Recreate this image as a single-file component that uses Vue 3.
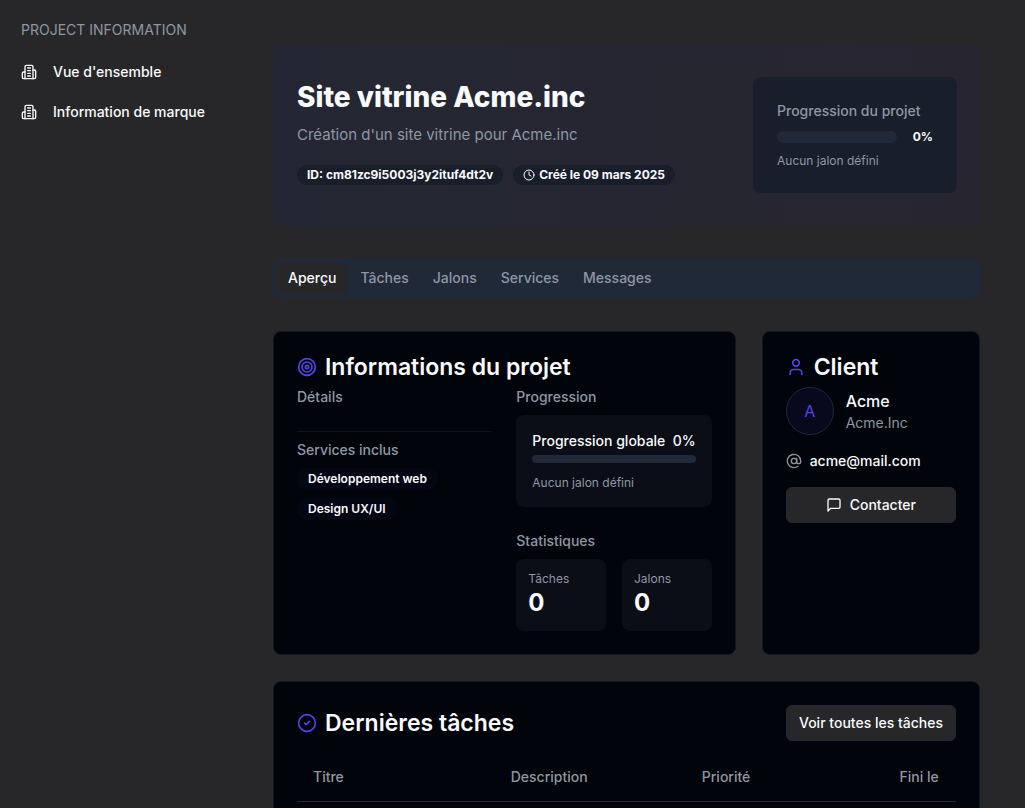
<script setup>
const navItems = ["Vue d'ensemble", 'Information de marque']
const tabs = ['Aperçu', 'Tâches', 'Jalons', 'Services', 'Messages']
const services = ['Développement web', 'Design UX/UI']
const stats = [
  { label: 'Tâches', value: 0 },
  { label: 'Jalons', value: 0 },
]
const columns = ['Titre', 'Description', 'Priorité', 'Fini le']
const progress = 0
</script>

<template>
  <div class="page">
    <aside class="sidebar">
      <h2 class="nav-title">PROJECT INFORMATION</h2>
      <nav class="nav">
        <a v-for="item in navItems" :key="item" href="#" class="nav-link">
          <svg class="icon16" viewBox="0 0 24 24">
            <path d="M6 22V4a2 2 0 0 1 2-2h8a2 2 0 0 1 2 2v18Z" />
            <path d="M6 12H4a2 2 0 0 0-2 2v6a2 2 0 0 0 2 2h2" />
            <path d="M18 9h2a2 2 0 0 1 2 2v9a2 2 0 0 1-2 2h-2" />
            <path d="M10 6h4M10 10h4M10 14h4M10 18h4" />
          </svg>
          <span>{{ item }}</span>
        </a>
      </nav>
    </aside>

    <main class="main">
      <header class="hero">
        <div class="hero-text">
          <h1>Site vitrine Acme.inc</h1>
          <p class="lead">Création d'un site vitrine pour Acme.inc</p>
          <div class="hero-badges">
            <span class="hero-badge">ID: cm81zc9i5003j3y2ituf4dt2v</span>
            <span class="hero-badge">
              <svg class="icon12" viewBox="0 0 24 24">
                <circle cx="12" cy="12" r="10" />
                <path d="M12 6v6l4 2" />
              </svg>
              Créé le 09 mars 2025
            </span>
          </div>
        </div>
        <section class="hero-progress">
          <h2 class="label">Progression du projet</h2>
          <div class="hero-bar-row">
            <div class="bar hero-bar"><div class="bar-fill" :style="{ width: progress + '%' }"></div></div>
            <span class="percent">{{ progress }}%</span>
          </div>
          <p class="note">Aucun jalon défini</p>
        </section>
      </header>

      <div class="tabs" role="tablist">
        <button v-for="(tab, i) in tabs" :key="tab" type="button" role="tab" :aria-selected="i === 0"
          class="tab" :class="{ active: i === 0 }">{{ tab }}</button>
      </div>

      <div class="grid">
        <section class="card wide">
          <h2 class="card-title">
            <svg class="icon20" viewBox="0 0 24 24">
              <circle cx="12" cy="12" r="10" />
              <circle cx="12" cy="12" r="6" />
              <circle cx="12" cy="12" r="2" />
            </svg>
            Informations du projet
          </h2>
          <div class="info-cols">
            <div>
              <h3 class="label">Détails</h3>
              <hr class="separator" />
              <h3 class="label">Services inclus</h3>
              <div class="services">
                <span v-for="s in services" :key="s" class="service">{{ s }}</span>
              </div>
            </div>
            <div>
              <h3 class="label">Progression</h3>
              <div class="panel">
                <div class="panel-row">
                  <span>Progression globale</span>
                  <span>{{ progress }}%</span>
                </div>
                <div class="bar"><div class="bar-fill" :style="{ width: progress + '%' }"></div></div>
                <p class="note">Aucun jalon défini</p>
              </div>
              <h3 class="label">Statistiques</h3>
              <div class="stats">
                <div v-for="s in stats" :key="s.label" class="stat">
                  <p class="note">{{ s.label }}</p>
                  <p class="stat-value">{{ s.value }}</p>
                </div>
              </div>
            </div>
          </div>
        </section>

        <section class="card">
          <h2 class="card-title">
            <svg class="icon20" viewBox="0 0 24 24">
              <circle cx="12" cy="7" r="4" />
              <path d="M19 21v-2a4 4 0 0 0-4-4H9a4 4 0 0 0-4 4v2" />
            </svg>
            Client
          </h2>
          <div class="client">
            <span class="avatar">A</span>
            <div>
              <p class="client-name">Acme</p>
              <p class="client-company">Acme.Inc</p>
            </div>
          </div>
          <p class="email">
            <svg class="icon16" viewBox="0 0 24 24">
              <circle cx="12" cy="12" r="4" />
              <path d="M16 8v5a3 3 0 0 0 6 0v-1a10 10 0 1 0-4 8" />
            </svg>
            acme@mail.com
          </p>
          <button type="button" class="button full">
            <svg class="icon16" viewBox="0 0 24 24">
              <path d="M21 15a2 2 0 0 1-2 2H7l-4 4V5a2 2 0 0 1 2-2h14a2 2 0 0 1 2 2z" />
            </svg>
            Contacter
          </button>
        </section>
      </div>

      <section class="card">
        <div class="tasks-head">
          <h2 class="card-title">
            <svg class="icon20" viewBox="0 0 24 24">
              <circle cx="12" cy="12" r="10" />
              <path d="m9 12 2 2 4-4" />
            </svg>
            Dernières tâches
          </h2>
          <button type="button" class="button">Voir toutes les tâches</button>
        </div>
        <table>
          <colgroup>
            <col class="col-title" />
            <col class="col-description" />
            <col class="col-priority" />
            <col />
          </colgroup>
          <thead>
            <tr>
              <th v-for="c in columns" :key="c" scope="col">{{ c }}</th>
            </tr>
          </thead>
        </table>
      </section>
    </main>
  </div>
</template>

<style>
body {
  margin: 0;
  background: #272729;
}
</style>

<style scoped>
.page {
  display: grid;
  grid-template-columns: 273px minmax(0, 1fr);
  height: 100vh;
  overflow: hidden;
  background: #272729;
  color: #f9fafb;
  font: 14px/20px Inter, "Noto Sans", sans-serif;
}
h1, h2, h3, p { margin: 0; font-weight: 500; }
svg {
  flex: none;
  fill: none;
  stroke: currentColor;
  stroke-width: 2;
  stroke-linecap: round;
  stroke-linejoin: round;
}
.icon12 { width: 12px; height: 12px; }
.icon16 { width: 16px; height: 16px; }
.icon20 { width: 20px; height: 20px; }

.sidebar { padding: 20px 21px; }
.nav-title { font-size: 14px; font-weight: 400; color: #8f97a3; }
.nav { display: flex; flex-direction: column; gap: 20px; margin-top: 22px; }
.nav-link {
  display: flex;
  align-items: center;
  gap: 16px;
  color: inherit;
  font-weight: 500;
  text-decoration: none;
}

.main {
  display: flex;
  flex-direction: column;
  padding: 44px 45px 0 0;
}
.hero {
  display: flex;
  justify-content: space-between;
  align-items: center;
  padding: 33px 23px 33px 24px;
  border-radius: 8px;
  background: linear-gradient(90deg, #242733, #272530);
}
.hero-text { padding-bottom: 6px; }
h1 { font-size: 28px; line-height: 36px; font-weight: 800; }
.lead { margin-top: 8px; font-size: 15px; line-height: 24px; font-weight: 400; color: #8f97a3; }
.hero-badges { display: flex; gap: 10px; margin-top: 18px; }
.hero-badge {
  display: inline-flex;
  align-items: center;
  gap: 4px;
  padding: 2px 10px;
  border-radius: 12px;
  background: #191e2b;
  font-size: 12px;
  line-height: 16px;
  font-weight: 700;
}
.hero-progress {
  box-sizing: border-box;
  width: 204px;
  padding: 24px;
  border-radius: 8px;
  background: #181e2a;
}
.label { font-size: 14px; line-height: 20px; color: #8f97a3; }
.note { font-size: 12px; line-height: 16px; font-weight: 400; color: #8f97a3; }
.hero-bar-row { display: flex; align-items: center; justify-content: space-between; margin: 8px 0; }
.bar { height: 8px; border-radius: 6px; background: #1f2937; overflow: hidden; }
.bar-fill { height: 100%; background: #4f46e5; }
.hero-bar { width: 120px; height: 12px; }
.percent { font-size: 12px; line-height: 16px; font-weight: 700; }

.tabs {
  display: flex;
  margin: 32px 0 33px;
  padding: 4px 3px;
  border-radius: 8px;
  background: #1f2937;
}
.tab {
  padding: 6px 12px;
  border: 0;
  border-radius: 6px;
  background: transparent;
  color: #8f97a3;
  font: inherit;
  font-weight: 500;
}
.tab.active { background: #272729; color: #f9fafb; }

.grid {
  display: grid;
  grid-template-columns: repeat(3, minmax(0, 1fr));
  gap: 26px;
  margin-bottom: 26px;
}
.wide { grid-column: span 2; }
.card {
  padding: 23px;
  border: 1px solid #0f1621;
  border-radius: 8px;
  background: #02040b;
}
.card-title {
  display: flex;
  align-items: center;
  gap: 8px;
  font-size: 23px;
  line-height: 24px;
  font-weight: 600;
}
.card-title svg { color: #4f46e5; }
.info-cols {
  display: grid;
  grid-template-columns: repeat(2, minmax(0, 1fr));
  gap: 24px;
  margin-top: 8px;
}
.separator { height: 1px; margin: 24px 0 8px; border: 0; background: #0f141e; }
.services { display: flex; flex-direction: column; align-items: flex-start; gap: 8px; margin-top: 8px; }
.service {
  padding: 3px 11px;
  border-radius: 12px;
  background: #050613;
  font-size: 12px;
  line-height: 16px;
  font-weight: 600;
}
.panel { margin: 8px 0 24px; padding: 16px; border-radius: 8px; background: #0b0e17; }
.panel-row { display: flex; justify-content: space-between; margin-bottom: 4px; font-weight: 500; }
.panel .note { margin-top: 12px; }
.stats { display: grid; grid-template-columns: 1fr 1fr; gap: 16px; margin-top: 8px; }
.stat { padding: 12px; border-radius: 8px; background: #0b0e17; }
.stat-value { font-size: 24px; line-height: 32px; font-weight: 700; }

.client { display: flex; align-items: center; gap: 12px; margin-top: 8px; }
.avatar {
  display: flex;
  align-items: center;
  justify-content: center;
  box-sizing: border-box;
  width: 48px;
  height: 48px;
  border: 1px solid #1f2937;
  border-radius: 50%;
  background: #09091d;
  color: #4f46e5;
  font-size: 16px;
}
.client-name { font-size: 16px; line-height: 24px; }
.client-company { font-weight: 400; color: #8f97a3; }
.email { display: flex; align-items: center; gap: 8px; margin: 16px 0; }
.email svg { color: #8f97a3; }
.button {
  display: inline-flex;
  align-items: center;
  justify-content: center;
  gap: 8px;
  padding: 7px 12px;
  border: 1px solid #1f2937;
  border-radius: 6px;
  background: #272729;
  color: #f9fafb;
  font: inherit;
  font-weight: 500;
}
.full { width: 100%; }

.tasks-head { display: flex; align-items: center; justify-content: space-between; }
table { width: 100%; margin-top: 12px; border-collapse: collapse; table-layout: fixed; }
.col-title { width: 30%; }
.col-description { width: 29%; }
.col-priority { width: 30%; }
th {
  height: 48px;
  padding: 0 16px;
  border-bottom: 1px solid #1f2937;
  color: #8f97a3;
  font-weight: 500;
  text-align: left;
  white-space: nowrap;
}
</style>
